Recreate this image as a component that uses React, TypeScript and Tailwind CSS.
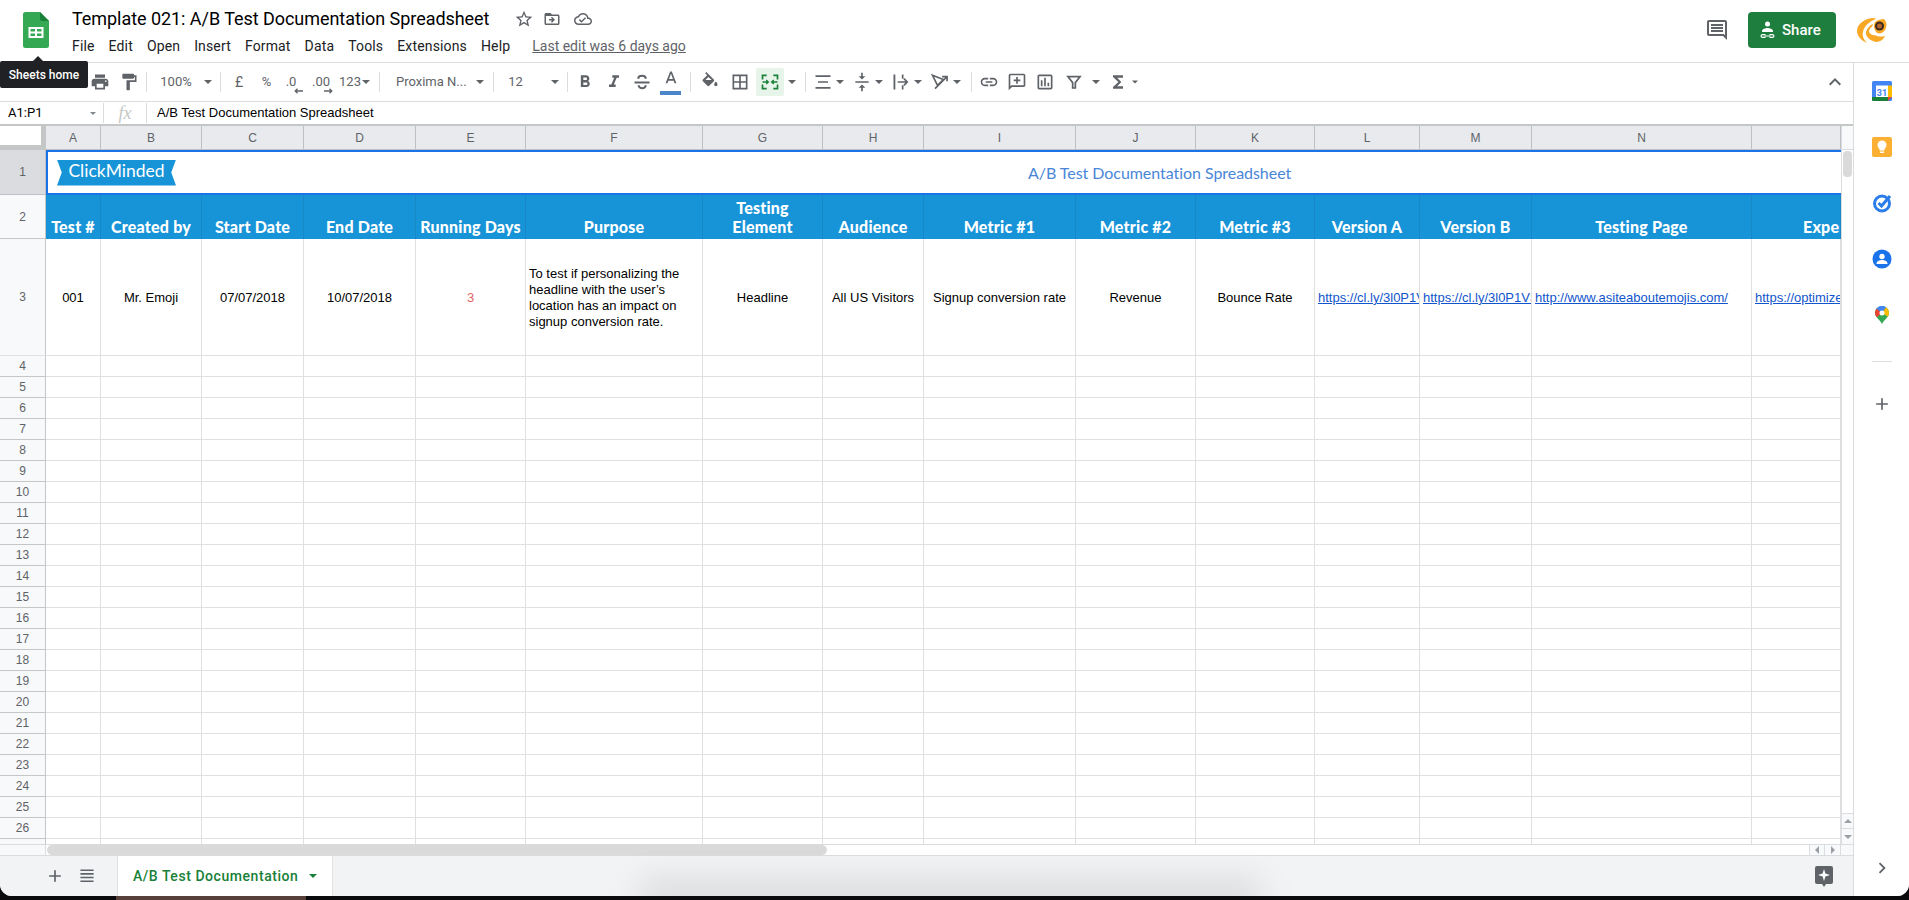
import type { ReactNode } from 'react'

const GRID = 'grid grid-cols-[46px_55px_101px_102px_112px_110px_177px_120px_101px_152px_120px_119px_105px_112px_220px_89px]'
const COLUMNS = ['A', 'B', 'C', 'D', 'E', 'F', 'G', 'H', 'I', 'J', 'K', 'L', 'M', 'N', '']
const HEADERS = ['Test #', 'Created by', 'Start Date', 'End Date', 'Running Days', 'Purpose', 'Testing Element', 'Audience', 'Metric #1', 'Metric #2', 'Metric #3', 'Version A', 'Version B', 'Testing Page']
const MENU = [
  ['File', 'ml-0'],
  ['Edit', 'ml-[14px]'],
  ['Open', 'ml-[14px]'],
  ['Insert', 'ml-[14px]'],
  ['Format', 'ml-[14px]'],
  ['Data', 'ml-[14px]'],
  ['Tools', 'ml-[14px]'],
  ['Extensions', 'ml-[14px]'],
  ['Help', 'ml-[14px]'],
]

function Icon({ d, size = 20, className = 'fill-[#5f6368]' }: { d: string; size?: number; className?: string }) {
  return (
    <svg width={size} height={size} viewBox="0 0 24 24" className={className}>
      <path d={d} />
    </svg>
  )
}

function Tool({ className, children }: { className: string; children?: ReactNode }) {
  return <div className={`flex shrink-0 items-center justify-center ${className}`}>{children}</div>
}

function Caret({ className = '' }: { className?: string }) {
  return (
    <Tool className={`w-[10px] ${className}`}>
      <div className="h-0 w-0 border-x-[4px] border-t-[4px] border-x-transparent border-t-[#5f6368]" />
    </Tool>
  )
}

function Sep({ className = '' }: { className?: string }) {
  return (
    <Tool className={`w-[6px] ${className}`}>
      <div className="h-[20px] w-px bg-[#dadce0]" />
    </Tool>
  )
}

function SheetsLogo() {
  return (
    <svg width="26" height="36" viewBox="0 0 26 36">
      <path d="M2.5 0H17l9 9v24.5a2.5 2.5 0 0 1-2.5 2.5h-21A2.5 2.5 0 0 1 0 33.500V2.500A2.500 2.500 0 0 1 2.500 0z" fill="#34a853" />
      <path d="M17 0l9 9h-6.500A2.500 2.500 0 0 1 17 6.500z" fill="#188038" />
      <path d="M5.500 15h15v11h-15zm2 2v2.500h4.500V17zm6.500 0v2.500h4.500V17zm-6.500 4.500V24h4.500v-2.500zm6.500 0V24h4.500v-2.500z" fill="#fff" fillRule="evenodd" />
    </svg>
  )
}

function Avatar() {
  return (
    <svg width="32" height="27" viewBox="0 0 32 27">
      <path d="M18 1C9 1 1 7 1 14c0 5 5 10 10 12-3-3-5-7-4-11 1-6 7-11 13-13z" fill="#f9a825" />
      <path d="M10 15c1-4 4-7 7-8-1 3-1 8 1 10 3 3 7 3 11 2-1 3-5 6-9 6-5-1-11-5-10-10z" fill="#f9a825" />
      <path d="M13 15c0-3 2-5 4-6 0 4 1 7 4 9-4 1-7-1-8-3z" fill="#fff" />
      <path d="M19 5c2-2 6-3 9-3 3 3 3 7 1 11-2 3-5 4-8 3-3-3-4-8-2-11z" fill="#f9a825" />
      <circle cx="23.500" cy="9" r="4.500" fill="#3c2a20" />
      <circle cx="23.500" cy="9" r="2.500" fill="#b5652a" />
    </svg>
  )
}

function Toolbar() {
  const gray = 'fill-[#5f6368]'
  return (
    <div className="flex h-[39px] items-center border-b border-[#dadce0] font-['Roboto',sans-serif] text-[14px] text-[#5f6368]">
      <Tool className="ml-[86px] w-[28px]">
        <Icon d="M19 8H5c-1.660 0-3 1.340-3 3v6h4v4h12v-4h4v-6c0-1.660-1.340-3-3-3zm-3 11H8v-5h8v5zm3-7c-.550 0-1-.450-1-1s.450-1 1-1 1 .450 1 1-.450 1-1 1zm-1-9H6v4h12V3z" />
      </Tool>
      <Tool className="w-[29px]">
        <Icon d="M18 4V3c0-.550-.450-1-1-1H5c-.550 0-1 .450-1 1v4c0 .550.450 1 1 1h12c.550 0 1-.450 1-1V6h1v4H9v11c0 .550.450 1 1 1h2c.550 0 1-.450 1-1v-9h8V4h-3z" />
      </Tool>
      <Sep />
      <Tool className="w-[54px] text-[13px]">100%</Tool>
      <Caret />
      <Sep className="ml-[4px]" />
      <Tool className="ml-px w-[30px] text-[14px]">£</Tool>
      <Tool className="w-[25px] text-[13px]">%</Tool>
      <Tool className="relative h-[24px] w-[24px] text-[13px]">
        .0
        <svg width="9" height="6" viewBox="0 0 9 6" className="absolute left-[15px] top-[18px] fill-none stroke-[#5f6368] stroke-[1.3]">
          <path d="M9 3H1.500M3.500 .8L1.200 3l2.300 2.200" />
        </svg>
      </Tool>
      <Tool className="relative h-[24px] w-[36px] text-[13px]">
        .00
        <svg width="9" height="6" viewBox="0 0 9 6" className="absolute left-[21px] top-[18px] fill-none stroke-[#5f6368] stroke-[1.3]">
          <path d="M0 3h7.500M5.500 .8L7.800 3 5.500 5.200" />
        </svg>
      </Tool>
      <Tool className="w-[22px] text-[13px]">123</Tool>
      <Caret />
      <Sep className="ml-[5px] w-[7px]" />
      <Tool className="w-[92px] justify-start pl-[13px] text-[13px]">Proxima N...</Tool>
      <Caret />
      <Sep className="ml-[5px]" />
      <Tool className="w-[39px] text-[13px]">12</Tool>
      <Caret className="ml-[15px]" />
      <Sep className="ml-[4px]" />
      <Tool className="w-[30px]">
        <Icon d="M15.600 10.790c.970-.670 1.650-1.770 1.650-2.790 0-2.260-1.750-4-4-4H7v14h7.040c2.090 0 3.710-1.700 3.710-3.790 0-1.520-.860-2.820-2.150-3.420zM10 6.500h3c.830 0 1.500.670 1.500 1.500s-.670 1.500-1.500 1.500h-3v-3zm3.500 9H10v-3h3.500c.830 0 1.500.670 1.500 1.500s-.670 1.500-1.500 1.500z" />
      </Tool>
      <Tool className="w-[28px]">
        <Icon d="M10 4v3h2.210l-3.420 8H6v3h8v-3h-2.210l3.420-8H18V4z" />
      </Tool>
      <Tool className="w-[27px]">
        <svg width="20" height="20" viewBox="0 0 24 24" className="fill-none stroke-[#5f6368] stroke-[2.5]">
          <path d="M3 12.500h18M16.500 8c0-2-2-3.500-4.500-3.500S7.500 6 7.500 8M8 16c0 2 2 3.500 4.300 3.500s4.200-1.500 4.200-3.500" />
        </svg>
      </Tool>
      <Tool className="relative h-[28px] w-[32px]">
        <Icon size={20} className="-mt-[6px] fill-[#5f6368]" d="M11 3L5.500 17h2.250l1.120-3h6.250l1.120 3h2.250L13 3h-2zm-1.380 9L12 5.670 14.380 12H9.620z" />
        <div className="absolute bottom-[1px] left-[5px] h-[4px] w-[21px] bg-[#4a86c8]" />
      </Tool>
      <Sep className="w-[7px]" />
      <Tool className="w-[32px]">
        <svg width="20" height="20" viewBox="0 0 24 24" className={gray}>
          <path d="M16.560 8.940L7.620 0 6.210 1.410l2.380 2.380-5.150 5.150c-.590.590-.590 1.540 0 2.120l5.500 5.500c.290.290.680.440 1.060.440s.770-.150 1.060-.440l5.500-5.500c.590-.580.590-1.530 0-2.120z" />
          <path d="M19 11.500s-2 2.170-2 3.500c0 1.100.900 2 2 2s2-.900 2-2c0-1.330-2-3.500-2-3.500z" />
          <path d="M6.500 9.500L10 6l4 3.500z" fill="#fff" />
        </svg>
      </Tool>
      <Tool className="w-[28px]">
        <Icon d="M3 3v18h18V3H3zm8 16H5v-6h6v6zm0-8H5V5h6v6zm8 8h-6v-6h6v6zm0-8h-6V5h6v6z" />
      </Tool>
      <Tool className="ml-[2px] h-[28px] w-[28px] rounded-[2px] bg-[#e6f4ea]">
        <svg width="20" height="20" viewBox="0 0 24 24" className="fill-none stroke-[#188038] stroke-2">
          <path d="M8 4H3v5M16 4h5v5M8 20H3v-5M16 20h5v-5" />
          <path d="M3 12h7M7.500 9.500L10 12l-2.500 2.500M21 12h-7M16.500 9.500L14 12l2.500 2.500" strokeWidth="1.600" />
        </svg>
      </Tool>
      <Caret className="ml-[3px]" />
      <Sep className="ml-[5px]" />
      <Tool className="ml-[3px] w-[24px]">
        <svg width="20" height="20" viewBox="0 0 24 24" className={gray}>
          <path d="M3 4h18v2H3zM6 11h12v2H6zM3 18h18v2H3z" />
        </svg>
      </Tool>
      <Caret />
      <Tool className="ml-[5px] w-[24px]">
        <Icon d="M8 19h3v4h2v-4h3l-4-4-4 4zm8-14h-3V1h-2v4H8l4 4 4-4zM4 11v2h16v-2H4z" />
      </Tool>
      <Caret />
      <Tool className="ml-[5px] w-[24px]">
        <svg width="20" height="20" viewBox="0 0 24 24" className={gray}>
          <path d="M3 3h2.200v18H3zM13 3h2v5h-2zM13 16h2v5h-2zM8 11h9.200l-2.400-2.400 1.400-1.300 4.700 4.700-4.700 4.700-1.400-1.300 2.400-2.400H8z" />
        </svg>
      </Tool>
      <Caret />
      <Tool className="ml-[5px] w-[24px]">
        <svg width="20" height="20" viewBox="0 0 24 24" className="fill-none stroke-[#5f6368] stroke-2">
          <path d="M3 4l13 5-7 7zM6 20L20 6M14.500 5.500H20.500V11" />
        </svg>
      </Tool>
      <Caret />
      <Sep className="ml-[6px]" />
      <Tool className="ml-[3px] w-[24px]">
        <Icon d="M3.900 12c0-1.710 1.390-3.100 3.100-3.100h4V7H7c-2.760 0-5 2.240-5 5s2.240 5 5 5h4v-1.900H7c-1.710 0-3.100-1.390-3.100-3.100zM8 13h8v-2H8v2zm9-6h-4v1.900h4c1.710 0 3.100 1.390 3.100 3.100s-1.390 3.100-3.100 3.100h-4V17h4c2.760 0 5-2.240 5-5s-2.240-5-5-5z" />
      </Tool>
      <Tool className="ml-[4px] w-[24px]">
        <Icon className="-scale-x-100 fill-[#5f6368]" d="M21.990 4c0-1.100-.890-2-1.990-2H4c-1.100 0-2 .900-2 2v12c0 1.100.900 2 2 2h14l4 4-.010-18zM20 4v13.170L18.830 16H4V4h16zM11 6h2v3h3v2h-3v3h-2v-3H8V9h3z" />
      </Tool>
      <Tool className="ml-[4px] w-[24px]">
        <Icon d="M19 3H5c-1.100 0-2 .900-2 2v14c0 1.100.900 2 2 2h14c1.100 0 2-.900 2-2V5c0-1.100-.900-2-2-2zm0 16H5V5h14v14zM7 10h2v7H7zm4-3h2v10h-2zm4 6h2v4h-2z" />
      </Tool>
      <Tool className="ml-[5px] w-[24px]">
        <svg width="16" height="16" viewBox="0 0 24 24" className="fill-none stroke-[#5f6368] stroke-[2.6]">
          <path d="M3 4h18l-7 9v8h-4v-8z" />
        </svg>
      </Tool>
      <Caret className="ml-[5px]" />
      <Tool className="ml-[5px] w-[24px]">
        <Icon d="M18 4H6v2l6.500 6L6 18v2h12v-3h-7l5-5-5-5h7z" />
      </Tool>
      <Caret className="scale-75" />
      <Tool className="ml-auto mr-[6px] w-[24px]">
        <Icon size={24} d="M7.410 15.410L12 10.830l4.590 4.580L18 14l-6-6-6 6z" />
      </Tool>
    </div>
  )
}

function FormulaBar() {
  return (
    <div className="flex h-[24px] items-center border-b-2 border-[#c4c7c5] font-['Liberation_Sans',sans-serif] text-[13px] text-black">
      <div className="w-[90px] pl-[8px] font-['Roboto',sans-serif]">A1:P1</div>
      <div className="h-0 w-0 border-x-[3px] border-t-[3px] border-x-transparent border-t-[#80868b]" />
      <div className="ml-[7px] h-[20px] w-px bg-[#dadce0]" />
      <div className="w-[42px] text-center font-['Liberation_Serif',serif] text-[18px] italic text-[#c4c7c5]">fx</div>
      <div className="h-[20px] w-px bg-[#dadce0]" />
      <div className="pl-[10px]">A/B Test Documentation Spreadsheet</div>
    </div>
  )
}

function Sheet() {
  const bodyCell = 'flex items-center justify-center overflow-hidden whitespace-nowrap border-r border-[#e0e0e0] pt-px'
  const linkCell = 'flex items-center overflow-hidden whitespace-nowrap border-r border-[#e0e0e0] pl-[3px] pt-px text-[#1155cc] underline'
  const headerCell = "border-r border-[#1a87c8] bg-[#1793d7] pb-[3px] font-['Lato',sans-serif] text-[16px] font-black leading-[18.500px] tracking-[0.2px] text-white"
  return (
    <div className="h-[718px] w-[1841px] shrink-0 overflow-hidden font-['Liberation_Sans',sans-serif] text-[13px] text-black">
      {/* column letters */}
      <div className={`${GRID} h-[24px]`}>
        <div className="border-b-[5px] border-r-[5px] border-[#c4c7c5] bg-white" />
        {COLUMNS.map((c, i) => (
          <div key={i} className="flex items-center justify-center border-b border-r border-[#bdc1c6] bg-[#e8eaed] text-[12px] text-[#5f6368]">
            {c}
          </div>
        ))}
      </div>

      {/* row 1, merged and selected */}
      <div className="flex h-[45px]">
        <div className="flex w-[46px] shrink-0 items-center justify-center border-b border-r border-[#bdc1c6] bg-[#dadce0] text-[12px] text-[#5f6368]">1</div>
        <div className="flex flex-1 items-center border-y-2 border-l-2 border-[#1a73e8] bg-white">
          <div className="ml-[9px] flex h-[26px] w-[119px] items-center justify-center bg-[#1793d7] pb-[2px] font-['Lato',sans-serif] text-[17.500px] text-white [clip-path:polygon(0_0,100%_0,96%_50%,100%_100%,0_100%,4%_50%)]">
            ClickMinded
          </div>
          <div className="ml-[852px] whitespace-nowrap font-['Lato',sans-serif] text-[16px] tracking-[-0.05px] text-[#4a86d8]">A/B Test Documentation Spreadsheet</div>
        </div>
      </div>

      {/* row 2, table headers */}
      <div className={`${GRID} h-[44px]`}>
        <div className="flex items-center justify-center border-b border-r border-[#c4c7c5] bg-[#f8f9fa] text-[12px] text-[#5f6368]">2</div>
        {HEADERS.map((h) => (
          <div key={h} className={`flex items-end justify-center text-center ${headerCell}`}>
            {h === 'Testing Element' ? <span>Testing<br />Element</span> : h}
          </div>
        ))}
        <div className={`flex items-end overflow-hidden whitespace-nowrap pl-[51px] ${headerCell}`}>
          Experiment
        </div>
      </div>

      {/* row 3, the test */}
      <div className={`${GRID} h-[117px] border-b border-[#e0e0e0]`}>
        <div className="flex items-center justify-center border-r border-[#c4c7c5] bg-[#f8f9fa] text-[12px] text-[#5f6368]">3</div>
        <div className={bodyCell}>001</div>
        <div className={bodyCell}>Mr. Emoji</div>
        <div className={bodyCell}>07/07/2018</div>
        <div className={bodyCell}>10/07/2018</div>
        <div className={`${bodyCell} text-[#e06666]`}>3</div>
        <div className="flex items-center border-r border-[#e0e0e0] pl-[3px] pr-[10px] pt-px leading-[16px]">
          To test if personalizing the headline with the user’s location has an impact on signup conversion rate.
        </div>
        <div className={bodyCell}>Headline</div>
        <div className={bodyCell}>All US Visitors</div>
        <div className={bodyCell}>Signup conversion rate</div>
        <div className={bodyCell}>Revenue</div>
        <div className={bodyCell}>Bounce Rate</div>
        <div className={linkCell}>https://cl.ly/3l0P1V3x</div>
        <div className={linkCell}>https://cl.ly/3l0P1V3x</div>
        <div className={linkCell}>http://www.asiteaboutemojis.com/</div>
        <div className={linkCell}>https://optimize.google.com</div>
      </div>

      {/* empty rows */}
      {Array.from({ length: 24 }, (_, r) => (
        <div key={r} className={`${GRID} h-[21px]`}>
          <div className="flex items-center justify-center border-b border-r border-[#c4c7c5] bg-[#f8f9fa] text-[12px] text-[#5f6368]">{r + 4}</div>
          {COLUMNS.map((_, c) => (
            <div key={c} className="border-b border-r border-[#e0e0e0]" />
          ))}
        </div>
      ))}
    </div>
  )
}

function VerticalScroll() {
  return (
    <div className="flex w-[12px] flex-col border-l border-[#dadce0]">
      <div className="h-[24px] shrink-0 border-b border-[#dadce0] bg-[#f8f9fa]" />
      <div className="ml-[1px] mt-[1px] h-[26px] w-[9px] rounded-[4px] bg-[#dadada]" />
      <div className="mt-auto flex h-[16px] items-center justify-center border-y border-[#dadce0] bg-[#f8f9fa]">
        <div className="h-0 w-0 border-x-[4px] border-b-[4px] border-x-transparent border-b-[#9aa0a6]" />
      </div>
      <div className="flex h-[15px] items-center justify-center bg-[#f8f9fa]">
        <div className="h-0 w-0 border-x-[4px] border-t-[4px] border-x-transparent border-t-[#9aa0a6]" />
      </div>
    </div>
  )
}

function HorizontalScroll() {
  return (
    <div className="flex h-[12px] border-y border-[#dadce0]">
      <div className="w-[46px] border-r border-[#dadce0] bg-[#f8f9fa]" />
      <div className="ml-[1px] h-[10px] w-[780px] rounded-[5px] bg-[#dadada]" />
      <div className="ml-auto flex w-[16px] items-center justify-center border-x border-[#dadce0] bg-[#f8f9fa]">
        <div className="h-0 w-0 border-y-[4px] border-r-[4px] border-y-transparent border-r-[#9aa0a6]" />
      </div>
      <div className="flex w-[16px] items-center justify-center border-r border-[#dadce0] bg-[#f8f9fa]">
        <div className="h-0 w-0 border-y-[4px] border-l-[4px] border-y-transparent border-l-[#9aa0a6]" />
      </div>
      <div className="w-[12px] bg-[#f8f9fa]" />
    </div>
  )
}

function SheetBar() {
  return (
    <div className="flex h-[40px] items-center bg-[#f1f3f4] font-['Roboto',sans-serif]">
      <div className="ml-[47px] w-[16px]">
        <Icon size={16} d="M19 13h-6v6h-2v-6H5v-2h6V5h2v6h6v2z" className="scale-125 fill-[#5f6368]" />
      </div>
      <div className="ml-[16px] w-[16px]">
        <svg width="16" height="16" viewBox="0 0 16 16" className="scale-110 fill-[#5f6368]">
          <path d="M2 2h12v1.500H2zM2 5.300h12v1.500H2zM2 8.600h12v1.500H2zM2 12h12v1.500H2z" />
        </svg>
      </div>
      <div className="ml-[22px] flex h-[40px] w-[216px] items-center border-x border-[#e0e0e0] bg-white pl-[15px] text-[14px] font-medium tracking-[0.55px] text-[#188038]">
        A/B Test Documentation
        <div className="ml-[11px] h-0 w-0 border-x-[4px] border-t-[4px] border-x-transparent border-t-[#188038]" />
      </div>
      <div className="ml-auto mr-[20px]">
        <svg width="18" height="21" viewBox="0 0 18 21" className="fill-[#5f6368]">
          <path d="M2 0h14a2 2 0 0 1 2 2v14a2 2 0 0 1-2 2h-5l-2 3-2-3H2a2 2 0 0 1-2-2V2a2 2 0 0 1 2-2z" />
          <path d="M9 3l1.400 4.600L15 9l-4.600 1.400L9 15l-1.400-4.600L3 9l4.600-1.400z" fill="#fff" />
        </svg>
      </div>
    </div>
  )
}

function SidePanel() {
  return (
    <div className="flex w-[56px] shrink-0 flex-col items-center border-l border-[#dadce0] bg-white">
      <Tool className="h-[56px] w-full">
        <svg width="20" height="20" viewBox="0 0 20 20">
          <rect width="20" height="20" rx="1.500" fill="#4285f4" />
          <rect x="4" y="4.500" width="12" height="11.500" fill="#fff" />
          <path d="M0 16h16v4H1.500A1.500 1.500 0 0 1 0 18.500z" fill="#188038" />
          <path d="M16 4.500h4V16h-4z" fill="#fbbc04" />
          <path d="M16 16h4l-4 4z" fill="#ea4335" />
          <text x="10" y="14.500" textAnchor="middle" fontSize="9" fontWeight="700" fontFamily="Roboto, sans-serif" fill="#4285f4">31</text>
        </svg>
      </Tool>
      <Tool className="h-[56px] w-full">
        <svg width="20" height="20" viewBox="0 0 20 20">
          <rect width="20" height="20" rx="2" fill="#fbb034" />
          <circle cx="10" cy="8" r="4.500" fill="#fff" />
          <rect x="7.500" y="12" width="5" height="1.500" fill="#fff" />
          <rect x="8" y="14.500" width="4" height="1.500" fill="#fff" />
        </svg>
      </Tool>
      <Tool className="h-[56px] w-full">
        <svg width="20" height="20" viewBox="0 0 20 20" className="fill-none">
          <circle cx="10" cy="10.500" r="7.500" stroke="#2b7de9" strokeWidth="3" />
          <path d="M6.500 10l3 3L18 3" stroke="#2b7de9" strokeWidth="3" />
        </svg>
      </Tool>
      <Tool className="h-[56px] w-full">
        <svg width="20" height="20" viewBox="0 0 20 20">
          <circle cx="10" cy="10" r="9.500" fill="#1a73e8" />
          <circle cx="10" cy="7.500" r="2.700" fill="#fff" />
          <path d="M4.500 14.500c0-2.500 3.500-3.500 5.500-3.500s5.500 1 5.500 3.500v.500h-11z" fill="#fff" />
        </svg>
      </Tool>
      <Tool className="h-[56px] w-full">
        <svg width="14" height="18" viewBox="0 0 14 18">
          <path d="M7 0a7 7 0 0 1 7 7c0 4-4.500 6-7 11C4.500 13 0 11 0 7a7 7 0 0 1 7-7z" fill="#34a853" />
          <path d="M1.500 2.600A7 7 0 0 0 0 7c0 1.700.800 3 1.900 4.300L7 7z" fill="#ea4335" />
          <path d="M1.500 2.600A7 7 0 0 1 11 1.300L7 7z" fill="#4285f4" />
          <path d="M11 1.300A7 7 0 0 1 14 7c0 1.300-.500 2.400-1.300 3.500L7 7z" fill="#fbbc04" />
          <circle cx="7" cy="7" r="2.500" fill="#fff" />
        </svg>
      </Tool>
      <div className="mt-[18px] h-px w-[20px] bg-[#dadce0]" />
      <Tool className="mt-[32px] h-[20px] w-full">
        <Icon size={20} d="M19 13h-6v6h-2v-6H5v-2h6V5h2v6h6v2z" />
      </Tool>
      <Tool className="mb-[18px] mt-auto h-[20px] w-full">
        <Icon size={22} d="M8.590 16.590L13.170 12 8.590 7.410 10 6l6 6-6 6z" />
      </Tool>
    </div>
  )
}

export default function App() {
  return (
    <div className="h-[900px] w-[1909px] overflow-hidden bg-[#0b0b0d]">
      <div className="relative h-[896px] overflow-hidden rounded-b-[12px] bg-white">
        {/* header */}
        <div className="flex h-[63px] items-start border-b border-[#dadce0] font-['Roboto',sans-serif]">
          <div className="ml-[23px] mt-[12px]">
            <SheetsLogo />
          </div>
          <div className="ml-[23px]">
            <div className="mt-[6px] flex h-[26px] items-center">
              <span className="whitespace-nowrap text-[18px] leading-[26px] tracking-[-0.05px] text-black">Template 021: A/B Test Documentation Spreadsheet</span>
              <span className="ml-[25px]"><Icon d="M22 9.240l-7.190-.620L12 2 9.190 8.630 2 9.240l5.460 4.730L5.820 21 12 17.270 18.180 21l-1.630-7.030L22 9.240zM12 15.400l-3.760 2.270 1-4.280-3.320-2.880 4.380-.380L12 6.100l1.710 4.040 4.380.380-3.320 2.880 1 4.280L12 15.400z" /></span>
              <span className="ml-[9px]"><Icon size={18} d="M20 6h-8l-2-2H4c-1.100 0-2 .900-2 2v12c0 1.100.900 2 2 2h16c1.100 0 2-.900 2-2V8c0-1.100-.900-2-2-2zm0 12H4V8h16v10zm-8.010-9l-1.410 1.410L12.160 12H8v2h4.160l-1.590 1.590L11.990 17 16 13.010 11.990 9z" /></span>
              <span className="ml-[13px]"><Icon size={18} d="M19.350 10.040C18.670 6.590 15.640 4 12 4 9.110 4 6.600 5.640 5.350 8.040 2.340 8.360 0 10.910 0 14c0 3.310 2.690 6 6 6h13c2.760 0 5-2.240 5-5 0-2.640-2.050-4.780-4.650-4.960zM19 18H6c-2.210 0-4-1.790-4-4s1.790-4 4-4h.710C7.370 7.690 9.480 6 12 6c3.040 0 5.500 2.460 5.500 5.500v.500H19c1.660 0 3 1.340 3 3s-1.340 3-3 3zm-9-3.820l-2.090-2.090L6.500 13.500 10 17l6.010-6.010-1.410-1.410z" /></span>
            </div>
            <div className="mt-[2px] flex items-center text-[14px] leading-[24px] tracking-[0.15px] text-[#202124]">
              {MENU.map(([label, gap]) => (
                <span key={label} className={gap}>{label}</span>
              ))}
              <span className="ml-[22px] whitespace-nowrap tracking-normal text-[#5f6368] underline">Last edit was 6 days ago</span>
            </div>
          </div>
          <div className="ml-auto mt-[12px] flex items-center">
            <Icon size={24} d="M21.990 4c0-1.100-.890-2-1.990-2H4c-1.100 0-2 .900-2 2v12c0 1.100.900 2 2 2h14l4 4-.010-18zM20 4v13.170L18.830 16H4V4h16zM6 12h12v2H6zm0-3h12v2H6zm0-3h12v2H6z" />
            <div className="ml-[19px] flex h-[36px] w-[88px] items-center rounded-[4px] bg-[#1e7e3e] pl-[12px] text-[15px] font-medium text-white">
              <svg width="15" height="18" viewBox="0 0 15 18" className="mr-[7px] fill-white">
                <circle cx="7.500" cy="3" r="2.500" />
                <path d="M2 10c0-2 3.500-3 5.500-3s5.500 1 5.500 3v1H2z" />
                <path d="M.500 15a2 2 0 0 1 2-2h3v1.200h-3a.800.800 0 0 0 0 1.600h3V17h-3a2 2 0 0 1-2-2zm9-2h3a2 2 0 0 1 0 4h-3v-1.200h3a.800.800 0 0 0 0-1.600h-3zM4.500 14.400h6v1.200h-6z" />
              </svg>
              Share
            </div>
            <div className="ml-[20px] mr-[21px]">
              <Avatar />
            </div>
          </div>
        </div>

        <div className="flex h-[833px]">
          <div className="flex w-[1853px] shrink-0 flex-col">
            <Toolbar />
            <FormulaBar />
            <div className="flex h-[718px]">
              <Sheet />
              <VerticalScroll />
            </div>
            <HorizontalScroll />
            <SheetBar />
          </div>
          <SidePanel />
        </div>

        {/* shadow of the dock on the bottom bar */}
        <div className="pointer-events-none absolute bottom-[-14px] left-[640px] h-[30px] w-[620px] bg-black/10 blur-lg" />

        {/* tooltip */}
        <div className="absolute left-0 top-[61px] flex h-[27px] w-[88px] items-center justify-center rounded-[2px] bg-[#202124] font-['Roboto',sans-serif] text-[12px] font-medium text-white">
          Sheets home
          <div className="absolute left-[33px] top-[-5px] h-0 w-0 border-x-[5px] border-b-[5px] border-x-transparent border-b-[#202124]" />
        </div>
      </div>
      <div className="flex h-[4px]">
        <div className="ml-[116px] w-[190px] bg-[#57403a]" />
      </div>
    </div>
  )
}
